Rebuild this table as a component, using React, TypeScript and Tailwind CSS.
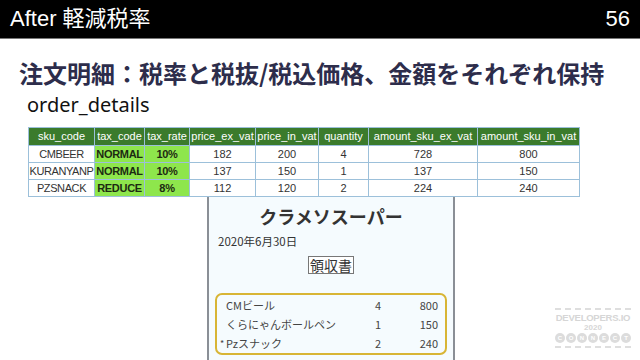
const cols = [
  { key: "sku_code", w: 66 },
  { key: "tax_code", w: 50 },
  { key: "tax_rate", w: 45 },
  { key: "price_ex_vat", w: 66 },
  { key: "price_in_vat", w: 63 },
  { key: "quantity", w: 50 },
  { key: "amount_sku_ex_vat", w: 109 },
  { key: "amount_sku_in_vat", w: 102 },
];

const rows = [
  ["CMBEER", "NORMAL", "10%", "182", "200", "4", "728", "800"],
  ["KURANYANP", "NORMAL", "10%", "137", "150", "1", "137", "150"],
  ["PZSNACK", "REDUCE", "8%", "112", "120", "2", "224", "240"],
];

const items = [
  { mark: "", name: "CMビール", qty: "4", price: "800" },
  { mark: "", name: "くらにゃんボールペン", qty: "1", price: "150" },
  { mark: "*", name: "Pzスナック", qty: "2", price: "240" },
];

function cellClass(i: number) {
  if (i === 1 || i === 2) {
    return "border border-[#9cc0da] bg-[#8ee64c] p-0 font-bold leading-none tracking-[-0.3px] text-[#1d2a12]";
  }
  if (i === 0) {
    return "border border-[#9cc0da] p-0 leading-none tracking-[-0.4px]";
  }
  return "border border-[#9cc0da] p-0 leading-none";
}

function Watermark() {
  return (
    <div className="absolute left-[555px] top-[308px] flex w-[76px] flex-col items-center text-[#d6d6d6]">
      <div className="w-full border-t-2 border-dashed border-[#dedede]" />
      <p className="mt-[3px] text-[9.5px] font-bold leading-[10px] tracking-tight">
        DEVELOPERS.IO
      </p>
      <p className="text-[8px] font-bold leading-[9px]">2020</p>
      <div className="mt-[1px] flex gap-[1px]">
        {"CONNECT".split("").map((c, i) => (
          <span
            className="flex h-[10px] w-[10px] items-center justify-center rounded-full bg-[#dcdcdc] text-[6px] font-bold leading-none text-white"
            key={i}
          >
            {c}
          </span>
        ))}
      </div>
      <div className="mt-[3px] w-full border-t-2 border-dashed border-[#dedede]" />
    </div>
  );
}

export default function App() {
  return (
    <div className="relative h-[360px] w-[640px] overflow-hidden bg-white font-['Liberation_Sans','Noto_Sans_CJK_JP',sans-serif]">
      <header className="flex h-[39px] items-center justify-between border-b border-[#777] bg-black px-[10px] text-white">
        <h1 className="text-[22px] leading-none">After 軽減税率</h1>
        <span className="text-[22px] leading-none">56</span>
      </header>

      <h2 className="mt-[20px] pl-[19px] font-['Noto_Sans_CJK_JP',sans-serif] text-[24px] font-bold leading-[28px] text-[#2d2d4b]">
        注文明細：税率と税抜/税込価格、金額をそれぞれ保持
      </h2>

      <p className="mt-[6px] pl-[27px] font-['Noto_Sans',sans-serif] text-[20px] leading-[24px] text-[#111]">
        order_details
      </p>

      <table className="ml-[28px] mt-[10px] w-[551px] table-fixed border-collapse text-center text-[11px] text-[#333]">
        <thead>
          <tr className="h-[18px] bg-[#3b7b2c] text-white">
            {cols.map((c) => (
              <th
                className="border border-[#9cc0da] p-0 font-normal leading-none"
                key={c.key}
                style={{ width: c.w }}
              >
                {c.key}
              </th>
            ))}
          </tr>
        </thead>
        <tbody>
          {rows.map((r) => (
            <tr className="h-[17px]" key={r[0]}>
              {r.map((v, i) => (
                <td className={cellClass(i)} key={i}>
                  {v}
                </td>
              ))}
            </tr>
          ))}
        </tbody>
      </table>

      <section className="ml-[207px] h-[170px] w-[248px] border-x-2 border-[#8a8f96] bg-[#f5fbfe] px-[6px] pt-[7px] font-['Noto_Sans_CJK_JP',sans-serif] text-[#333]">
        <p className="text-center text-[18px] font-bold leading-[24px]">
          クラメソスーパー
        </p>
        <p className="mt-[6px] pl-[3px] text-[11.5px] leading-[14px]">
          2020年6月30日
        </p>
        <div className="mt-[8px] flex justify-center">
          <span className="border-[1.5px] border-[#777] bg-white px-[1px] text-[14px] leading-[16px]">
            領収書
          </span>
        </div>
        <div className="mt-[19px] rounded-[7px] border-2 border-[#d8b535] pl-[9px] pr-[7px] pt-[1px] text-[11px] text-[#444]">
          {items.map((it) => (
            <div className="flex h-[19px] items-center" key={it.name}>
              <span className="-ml-[6px] w-[6px] shrink-0 text-[9px]">
                {it.mark}
              </span>
              <span className="flex-1">{it.name}</span>
              <span className="w-[20px] text-center">{it.qty}</span>
              <span className="w-[50px] text-right">{it.price}</span>
            </div>
          ))}
        </div>
      </section>

      <Watermark />
    </div>
  );
}
